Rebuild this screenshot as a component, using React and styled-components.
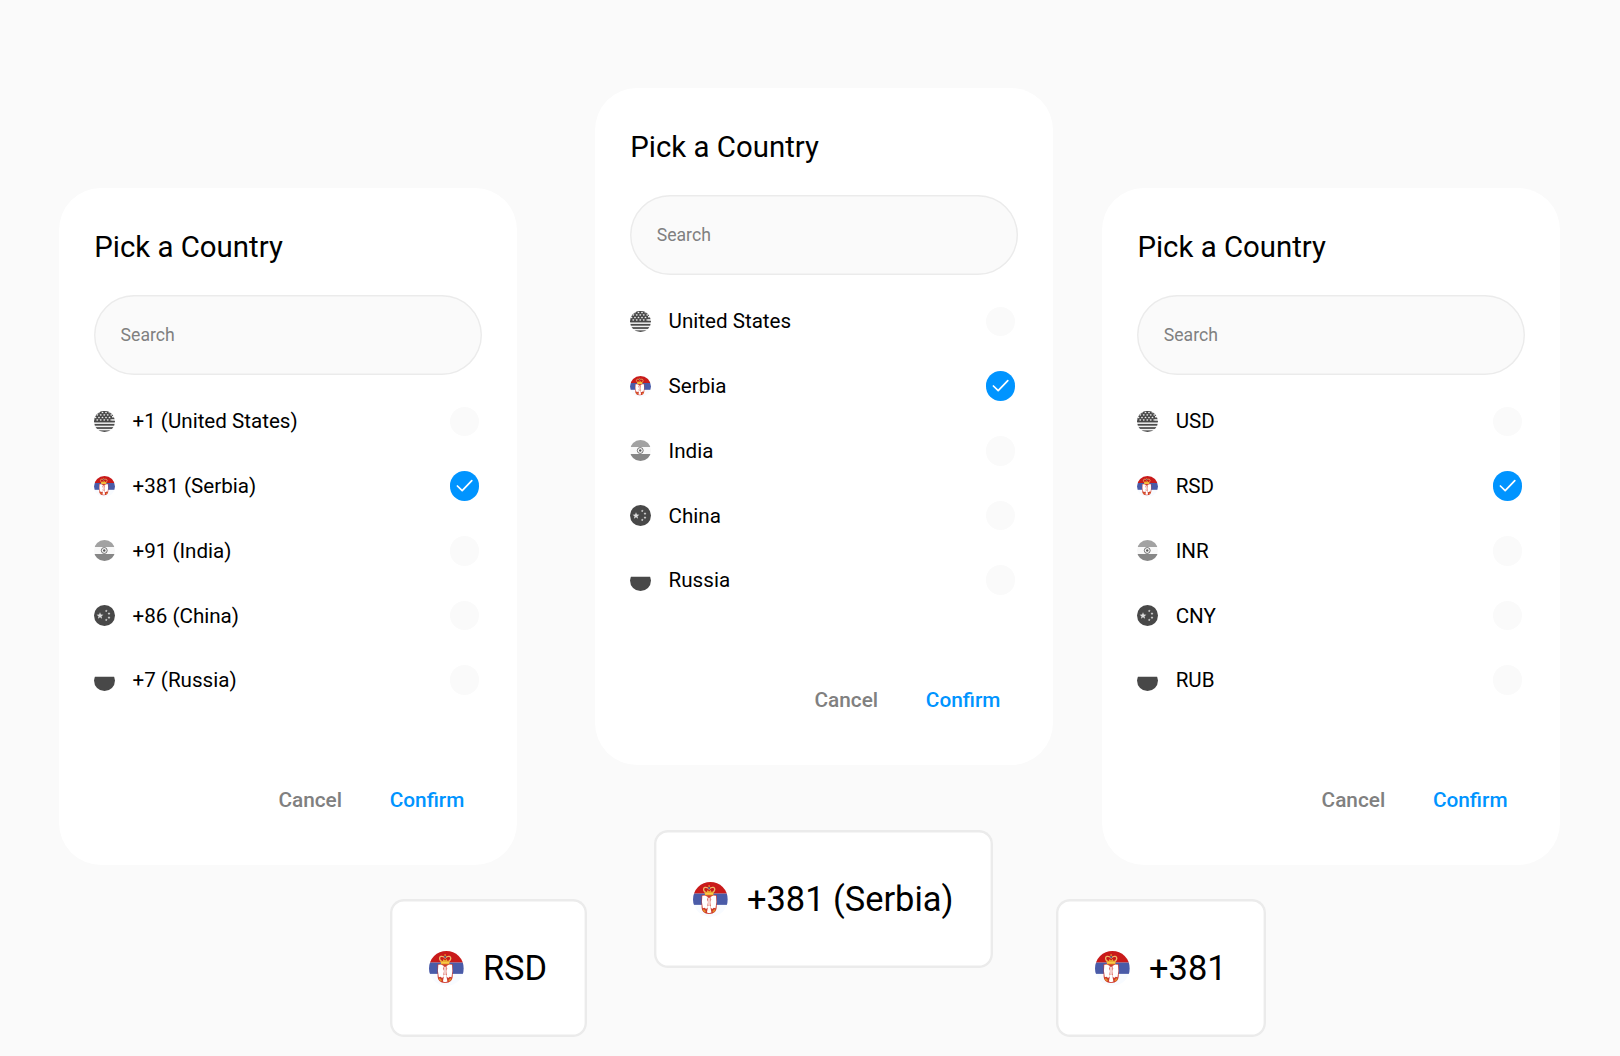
import React from "react";
import styled, { createGlobalStyle } from "styled-components";

const GlobalStyle = createGlobalStyle`
  *, *::before, *::after { box-sizing: border-box; }
  body { margin: 0; background: #fafafa; font-family: Roboto, sans-serif; color: #000; }
`;

const Page = styled.main`
  width: 1620px;
  height: 1056px;
  overflow: hidden;
  padding: 88px 59.5px 0 59px;
  display: flex;
  justify-content: space-between;
  align-items: flex-start;
`;

const Column = styled.section`
  display: flex;
  flex-direction: column;
  width: 458.3px;
  margin-top: ${(p) => p.$drop || 0}px;
  margin-left: ${(p) => p.$shift || 0}px;
`;

const Card = styled.div`
  height: 677px;
  padding: 41px 35.2px 0;
  border-radius: 42px;
  background: #fff;
  display: flex;
  flex-direction: column;
`;

const Title = styled.h1`
  margin: 0;
  font-size: 29.4px;
  line-height: 36px;
  font-weight: 400;
`;

const Search = styled.input`
  width: 387.9px;
  height: 80px;
  margin: 29.8px 0 14.3px;
  padding: 0 26.4px;
  border: 0;
  box-shadow: inset 0 0 0 1.4px #ebebeb;
  border-radius: 40px;
  background: #fafafa;
  font: 400 17.65px Roboto, sans-serif;
  outline: none;
  &::placeholder { color: #808080; opacity: 1; }
`;

const List = styled.ul`
  list-style: none;
  margin: 0;
  padding: 0 2.9px 0 0;
`;

const Row = styled.li`
  height: 64.7px;
  display: flex;
  align-items: center;
`;

const Label = styled.span`
  flex: 1;
  margin-left: 17.3px;
  font-size: 20.6px;
  line-height: 26px;
`;

const Radio = styled.span`
  width: 29.4px;
  height: 29.4px;
  border-radius: 50%;
  display: flex;
  background: ${(p) => (p.$on ? "#0094ff" : "#fafafa")};
`;

const Actions = styled.div`
  display: flex;
  justify-content: flex-end;
  gap: 47.7px;
  margin-top: 74.1px;
  padding-right: 17.8px;
`;

const Action = styled.button`
  border: 0;
  padding: 0;
  background: none;
  font: 500 20.8px/26px Roboto, sans-serif;
  color: ${(p) => (p.$primary ? "#0094ff" : "#808080")};
`;

const Chip = styled.div`
  width: ${(p) => p.$width}px;
  height: 137.5px;
  margin: ${(p) => p.$top}px 0 0 ${(p) => p.$left}px;
  padding-left: 39px;
  box-shadow: inset 0 0 0 2.4px #ebebeb;
  border-radius: 14px;
  background: #fff;
  display: flex;
  align-items: center;
  flex-shrink: 0;
`;

const ChipFlag = styled.span`
  display: flex;
  padding-top: 1.6px;
`;

const ChipText = styled.span`
  margin-left: 19.1px;
  font-size: 34.4px;
  line-height: 42px;
  padding-top: 0.5px;
  white-space: nowrap;
`;

const Svg = styled.svg`
  display: block;
  flex: none;
  width: ${(p) => p.$size}px;
  height: ${(p) => p.$size}px;
`;

const starPath = (cx, cy, r) =>
  Array.from({ length: 10 }, (_, i) => {
    const a = -Math.PI / 2 + (i * Math.PI) / 5;
    const d = i % 2 ? r * 0.42 : r;
    return `${i ? "L" : "M"}${(cx + d * Math.cos(a)).toFixed(2)} ${(cy + d * Math.sin(a)).toFixed(2)}`;
  }).join("") + "Z";

const wing =
  "M11.2 16.6L14.5 16.4L18 18.2L17 21.5L18.2 24L17.4 28L18.2 30.5L15.8 32.6L14 31L11.8 31.6L10.8 24Z";

const art = {
  us: (
    <>
      <rect width="42" height="42" fill="#f0f0f0" />
      {[0, 1, 2, 3, 4, 5, 6].map((i) => (
        <rect key={i} y={i * 6.46} width="42" height="3.5" fill="#4b4b4b" />
      ))}
      <rect width="36" height="22" fill="#484848" />
      {[3, 8, 13, 18].map((y, r) =>
        [3, 10, 17, 24, 31].map((x) => (
          <path key={`${x}-${y}`} d={starPath(x + (r % 2) * 3.5, y, 2.6)} fill="#eee" />
        ))
      )}
    </>
  ),
  rs: (
    <>
      <rect width="42" height="42" fill="#f8fbff" />
      <rect width="42" height="14" fill="#c91a1a" />
      <rect y="14" width="42" height="13.6" fill="#4a5ba8" />
      <path d="M10.4 16C13 15 26 15 28.6 16V30C28.6 35.5 25.5 38.6 19.5 38.6C13.5 38.6 10.4 35.5 10.4 30Z" fill="#cf3a2c" />
      <path d={wing} fill="#fff" />
      <path d={wing} fill="#fff" transform="matrix(-1 0 0 1 39 0)" />
      <path d="M17.8 19H21.2V28L19.5 29.5L17.8 28Z" fill="#f4cbc7" />
      <path d="M18.2 29H20.8L22.2 36.8L19.5 37.6L16.8 36.8Z" fill="#fff" />
      <path d="M12.3 33.3L15 36M26.7 33.3L24 36" stroke="#e28b29" strokeWidth="2" />
      <path
        d="M15 12.5C12.4 10.5 11.8 7.4 14.4 6.6C16.6 6 18.2 7.2 19.5 8.4C20.8 7.2 22.4 6 24.6 6.6C27.2 7.4 26.6 10.5 24 12.5"
        fill="none"
        stroke="#efb869"
        strokeWidth="1.6"
      />
      <path d="M14 11.4L16.6 12L17.6 9.8L19.5 11.6L21.4 9.8L22.4 12L25 11.4L24.6 16H14.4Z" fill="#eaac30" />
      <circle cx="19.5" cy="7.2" r="1.2" fill="#48568f" />
      <path d="M19.5 4V6M18.5 4.8H20.5" stroke="#eaac30" strokeWidth=".9" />
      <path d="M14.8 14.2H24.2" stroke="#ffd252" strokeWidth="1.4" />
    </>
  ),
  in: (
    <>
      <rect width="42" height="42" fill="#f8f8f8" />
      <rect width="42" height="14" fill="#a2a2a2" />
      <rect y="28" width="42" height="14" fill="#868686" />
      <circle cx="20.5" cy="21" r="5.9" fill="none" stroke="#5c5c5c" strokeWidth="1.7" />
      <circle cx="20.5" cy="21" r="2.4" fill="#5c5c5c" />
    </>
  ),
  cn: (
    <>
      <rect width="42" height="42" fill="#484848" />
      <path d={starPath(12, 21.5, 7.2)} fill="#dcdcdc" />
      <path d={starPath(24.5, 12, 2.8)} fill="#dcdcdc" />
      <path d={starPath(30, 17, 3)} fill="#dcdcdc" />
      <path d={starPath(30, 25, 3)} fill="#dcdcdc" />
      <path d={starPath(24.5, 30, 2.8)} fill="#dcdcdc" />
    </>
  ),
  ru: (
    <>
      <rect width="42" height="42" fill="#fff" />
      <rect y="13.5" width="42" height="28.5" fill="#484848" />
    </>
  ),
};

function Flag({ code, size = 21 }) {
  const id = React.useId();
  return (
    <Svg $size={size} viewBox="0 0 42 42" aria-hidden="true">
      <clipPath id={id}>
        <circle cx="21" cy="21" r="21" />
      </clipPath>
      <g clipPath={`url(#${id})`}>{art[code]}</g>
    </Svg>
  );
}

const codes = ["us", "rs", "in", "cn", "ru"];

function Picker({ labels }) {
  return (
    <Card>
      <Title>Pick a Country</Title>
      <Search placeholder="Search" />
      <List>
        {labels.map((label, i) => (
          <Row key={label}>
            <Flag code={codes[i]} />
            <Label>{label}</Label>
            <Radio $on={i === 1}>
              {i === 1 && (
                <Svg $size={29.4} viewBox="0 0 29.4 29.4">
                  <path d="M7.4 15L12.2 19.7L21.8 9.7" fill="none" stroke="#fff" strokeWidth="1.7" strokeLinecap="round" strokeLinejoin="round" />
                </Svg>
              )}
            </Radio>
          </Row>
        ))}
      </List>
      <Actions>
        <Action>Cancel</Action>
        <Action $primary>Confirm</Action>
      </Actions>
    </Card>
  );
}

function Selected({ text, ...place }) {
  return (
    <Chip {...place}>
      <ChipFlag>
        <Flag code="rs" size={34.8} />
      </ChipFlag>
      <ChipText>{text}</ChipText>
    </Chip>
  );
}

export default function App() {
  return (
    <>
      <GlobalStyle />
      <Page>
        <Column $drop={100}>
          <Picker labels={["+1 (United States)", "+381 (Serbia)", "+91 (India)", "+86 (China)", "+7 (Russia)"]} />
          <Selected text="RSD" $width={197} $top={34} $left={331} />
        </Column>
        <Column $shift={29}>
          <Picker labels={["United States", "Serbia", "India", "China", "Russia"]} />
          <Selected text="+381 (Serbia)" $width={339} $top={65} $left={59} />
        </Column>
        <Column $drop={100}>
          <Picker labels={["USD", "RSD", "INR", "CNY", "RUB"]} />
          <Selected text="+381" $width={210} $top={34} $left={-46} />
        </Column>
      </Page>
    </>
  );
}
